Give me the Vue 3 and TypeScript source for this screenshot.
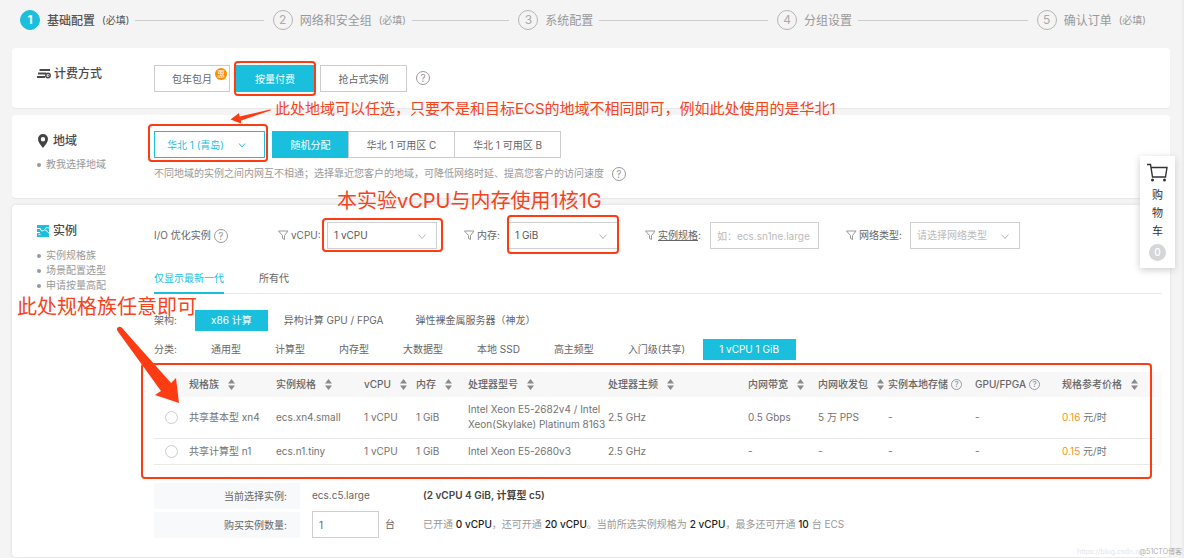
<script setup lang="ts">
import { ref } from 'vue'

interface Step { label: string; required: boolean }
interface Column { label: string; width?: number; sort?: boolean; help?: boolean }
interface Instance { id: string; cells: string[]; price: string }

const steps: Step[] = [
  { label: '基础配置', required: true },
  { label: '网络和安全组', required: true },
  { label: '系统配置', required: false },
  { label: '分组设置', required: false },
  { label: '确认订单', required: true },
]

const columns: Column[] = [
  { label: '规格族', width: 87, sort: true },
  { label: '实例规格', width: 88, sort: true },
  { label: 'vCPU', width: 52, sort: true },
  { label: '内存', width: 52, sort: true },
  { label: '处理器型号', width: 140, sort: true },
  { label: '处理器主频', width: 140, sort: true },
  { label: '内网带宽', width: 70, sort: true },
  { label: '内网收发包', width: 70, sort: true },
  { label: '实例本地存储', width: 87, help: true },
  { label: 'GPU/FPGA', width: 87, help: true },
  { label: '规格参考价格', sort: true },
]

const instances: Instance[] = [
  {
    id: 'ecs.xn4.small',
    cells: ['共享基本型 xn4', 'ecs.xn4.small', '1 vCPU', '1 GiB', 'Intel Xeon E5-2682v4 / Intel\nXeon(Skylake) Platinum 8163', '2.5 GHz', '0.5 Gbps', '5 万 PPS', '-', '-'],
    price: '0.16',
  },
  {
    id: 'ecs.n1.tiny',
    cells: ['共享计算型 n1', 'ecs.n1.tiny', '1 vCPU', '1 GiB', 'Intel Xeon E5-2680v3', '2.5 GHz', '-', '-', '-', '-'],
    price: '0.15',
  },
]

const zones = ['随机分配', '华北 1 可用区 C', '华北 1 可用区 B']
const architectures = ['x86 计算', '异构计算 GPU / FPGA', '弹性裸金属服务器（神龙）']
const categories = ['通用型', '计算型', '内存型', '大数据型', '本地 SSD', '高主频型', '入门级(共享)', '1 vCPU 1 GiB']

const zone = ref(zones[0])
const architecture = ref(architectures[0])
const category = ref(categories[7])
const selected = ref('')
const quantity = ref('1')
</script>

<template>
  <div class="page">
    <ol class="steps">
      <li v-for="(step, i) in steps" :key="step.label" :class="{ current: i === 0 }">
        <span class="num">{{ i + 1 }}</span>
        <span class="step-label">{{ step.label }}</span>
        <small v-if="step.required">(必填)</small>
        <i v-if="i < steps.length - 1" class="line"></i>
      </li>
    </ol>

    <section class="card billing">
      <div class="side">
        <h2>
          <svg width="14" height="12" viewBox="0 0 14 12" fill="none" stroke="#4a4a4a">
            <path d="M2.500 2H13M1 5.500h8M0 9h8" stroke-width="2" /><circle cx="11" cy="7.500" r="2.200" stroke-width="1.500" /><path d="M11 6.500v1.200h1" />
          </svg>
          计费方式
        </h2>
      </div>
      <div class="main options">
        <button class="btn month">包年包月<span class="deal">惠</span></button>
        <div class="mark mark-pay"><button class="btn on payg">按量付费</button></div>
        <button class="btn spot">抢占式实例</button>
        <button class="help" aria-label="计费方式说明">?</button>
      </div>
    </section>

    <section class="card region">
      <div class="side">
        <h2>
          <svg class="pin" width="14" height="14" viewBox="0 0 14 14"><path fill="#444" fill-rule="evenodd" d="M7 0a5 5 0 0 0-5 5c0 3.500 5 9 5 9s5-5.500 5-9a5 5 0 0 0-5-5zm0 3a2.200 2.200 0 1 1 0 4.400A2.200 2.200 0 0 1 7 3z" /></svg>
          地域
        </h2>
        <ul><li><a href="#region">教我选择地域</a></li></ul>
      </div>
      <div class="main">
        <div class="options">
          <div class="mark mark-region">
            <div class="select city">
              <select aria-label="地域"><option>华北 1 (青岛)</option></select>
              <svg width="8" height="5" viewBox="0 0 8 5"><path d="M1 0.500l3 3.500 3-3.500" /></svg>
            </div>
          </div>
          <div class="zones">
            <button v-for="z in zones" :key="z" class="btn" :class="{ on: zone === z }" @click="zone = z">{{ z }}</button>
          </div>
        </div>
        <p class="hint">不同地域的实例之间内网互不相通；选择靠近您客户的地域，可降低网络时延、提高您客户的访问速度 <button class="help" aria-label="地域说明">?</button></p>
      </div>
      <p class="note note-region">此处地域可以任选，只要不是和目标ECS的地域不相同即可，例如此处使用的是华北1</p>
      <svg class="arrow arrow-region" width="42" height="16" viewBox="0 0 42 16"><path d="M0.500 10.500L9 4l0.500 3.500L40 0.500Q41.500 0.500 40.500 1.500L11 11.500v3z" /></svg>
    </section>

    <section class="card instance">
      <div class="side">
        <h2>
          <svg width="13" height="12" viewBox="0 0 13 12"><path fill="#19bfdc" d="M0 0h12v12H0z" /><path d="M0 3.500h3.500M8 3.500q2-1.500 4-0.500M0 7.500h3M3 3.500q1.500 4 3.500 2t5.500 3M1.500 9.500h2" fill="none" stroke="#fff" /></svg>
          实例
        </h2>
        <ul>
          <li><a href="#family">实例规格族</a></li>
          <li><a href="#scene">场景配置选型</a></li>
          <li><a href="#quota">申请按量高配</a></li>
        </ul>
      </div>
      <div class="main">
        <div class="filters">
          <div class="io">I/O 优化实例<button class="help" aria-label="I/O 优化说明">?</button></div>
          <div class="filter">
            <label for="cpu"><svg class="funnel" width="11" height="11" viewBox="0 0 11 11"><path d="M0.500 1h9.500L6.500 5.500v4l-2-1v-3z" /></svg>vCPU:</label>
            <div class="mark mark-cpu"><div class="select"><select id="cpu"><option>1 vCPU</option></select><svg width="8" height="5" viewBox="0 0 8 5"><path d="M0.500 0.500l3.500 4 3.500-4" /></svg></div></div>
          </div>
          <div class="filter">
            <label for="mem"><svg class="funnel" width="11" height="11" viewBox="0 0 11 11"><path d="M0.500 1h9.500L6.500 5.500v4l-2-1v-3z" /></svg>内存:</label>
            <div class="mark mark-mem"><div class="select"><select id="mem"><option>1 GiB</option></select><svg width="8" height="5" viewBox="0 0 8 5"><path d="M0.500 0.500l3.500 4 3.500-4" /></svg></div></div>
          </div>
          <div class="filter">
            <label for="spec"><svg class="funnel" width="11" height="11" viewBox="0 0 11 11"><path d="M0.500 1h9.500L6.500 5.500v4l-2-1v-3z" /></svg><u>实例规格</u>:</label>
            <input id="spec" class="field" placeholder="如：ecs.sn1ne.large">
          </div>
          <div class="filter">
            <label for="net"><svg class="funnel" width="11" height="11" viewBox="0 0 11 11"><path d="M0.500 1h9.500L6.500 5.500v4l-2-1v-3z" /></svg>网络类型:</label>
            <div class="select empty"><select id="net"><option>请选择网络类型</option></select><svg width="8" height="5" viewBox="0 0 8 5"><path d="M0.500 0.500l3.500 4 3.500-4" /></svg></div>
          </div>
        </div>

        <div class="tabs"><button class="active">仅显示最新一代</button><button>所有代</button></div>

        <div class="chips arch"><span>架构:</span><button v-for="a in architectures" :key="a" :class="{ on: architecture === a }" @click="architecture = a">{{ a }}</button></div>
        <div class="chips kinds"><span>分类:</span><button v-for="c in categories" :key="c" :class="{ on: category === c }" @click="category = c">{{ c }}</button></div>

        <div class="mark mark-table table-wrap">
          <table>
            <colgroup><col class="pick"><col v-for="c in columns" :key="c.label" :style="c.width ? { width: c.width + 'px' } : undefined"></colgroup>
            <thead>
              <tr>
                <th></th>
                <th v-for="c in columns" :key="c.label">
                  <div class="head">{{ c.label }}<button v-if="c.sort" class="sort" :aria-label="c.label + '排序'"><svg width="7" height="11" viewBox="0 0 7 11"><path d="M3.500 0L7 4.500H0zM3.500 11L7 6.500H0z" fill="#8a8a8a" /></svg></button><button v-if="c.help" class="help small" :aria-label="c.label + '说明'">?</button></div>
                </th>
              </tr>
            </thead>
            <tbody>
              <tr v-for="row in instances" :key="row.id">
                <td class="pick-cell"><input v-model="selected" type="radio" name="instance" :value="row.id" :aria-label="row.id"></td>
                <td v-for="(cell, i) in row.cells" :key="i">{{ cell }}</td>
                <td><span class="price">{{ row.price }}</span> 元/时</td>
              </tr>
            </tbody>
          </table>
        </div>

        <dl class="summary">
          <dt>当前选择实例:</dt>
          <dd><span class="chosen">ecs.c5.large</span><b>(2 vCPU 4 GiB, 计算型 c5)</b></dd>
          <dt><label for="quantity">购买实例数量:</label></dt>
          <dd>
            <span class="count"><input id="quantity" v-model="quantity" class="field">台</span>
            <span class="quota">已开通 <strong>0 vCPU</strong>，还可开通 <strong>20 vCPU</strong>。当前所选实例规格为 <strong>2 vCPU</strong>，最多还可开通 <strong>10</strong> 台 ECS</span>
          </dd>
        </dl>
      </div>
      <p class="note note-spec">本实验vCPU与内存使用1核1G</p>
      <p class="note note-family">此处规格族任意即可</p>
      <svg class="arrow arrow-family" width="64" height="80" viewBox="0 0 64 80"><path d="M1.500 5Q0 2 2.500 1Q5 0 7 3L55 57l5-5 3 25-24-8 6-4z" /></svg>
    </section>

    <button class="cart">
      <svg width="21" height="19" viewBox="0 0 21 19" fill="none" stroke="#333"><path d="M0 1.500h3.500L5.500 14H18.500L20 4.500H4" stroke-width="1.400" /><circle cx="5.500" cy="17" r="1.500" fill="#333" stroke="none" /><circle cx="17.500" cy="17" r="1.500" fill="#333" stroke="none" /></svg>
      <span>购</span><span>物</span><span>车</span>
      <b>0</b>
    </button>
    <div class="watermark"><span>https://blog.csdn.n</span>@51CTO博客</div>
  </div>
</template>

<style>
body { background: #f4f4f4; }
</style>

<style scoped>
.page {
  position: relative;
  box-sizing: border-box;
  min-height: 100vh;
  padding: 0 12px;
  border-right: 2px solid #ececf0;
  background: #f4f4f4;
  color: #666;
  font: 10px/15px Inter, "Noto Sans CJK SC", sans-serif;
}
.page *, .page *::before, .page *::after { box-sizing: border-box; }
button, input, select { font: inherit; color: inherit; margin: 0; }
button { padding: 0; border: 0; background: none; white-space: nowrap; cursor: pointer; }
ol, ul, dl, dd, p, h2 { margin: 0; padding: 0; list-style: none; }
a { color: inherit; text-decoration: none; }

.steps { display: grid; grid-template-columns: 253fr 246fr 259fr 260fr auto; height: 48px; padding: 9px 24px 0 8px; color: #999; }
.steps li { display: flex; align-items: center; height: 21px; white-space: nowrap; font-size: 12px; }
.num { flex: none; width: 20px; height: 20px; margin-right: 7px; border: 1px solid #b5b5b5; border-radius: 50%; text-align: center; line-height: 18px; color: #aaa; }
.step-label, .steps small { padding-top: 2px; }
.steps small { margin-left: 7px; font-size: 10px; }
.line { flex: 1; height: 1px; margin: 2px 9px 0 6px; background: #ccc; }
.current { color: #555; font-weight: 500; }
.current small { font-weight: 400; }
.current .num { border-color: #19bfdc; background: #19bfdc; color: #fff; font-weight: 700; }

.card { position: relative; display: flex; margin-bottom: 7px; border-radius: 4px; background: #fff; box-shadow: 0 1px 1px #e8e8e8; }
.side { flex: none; width: 142px; padding-left: 25px; }
.main { flex: 1; min-width: 0; padding-right: 8px; }
h2 { display: flex; align-items: center; gap: 3px; font-size: 12px; font-weight: 500; line-height: 18px; color: #4a4a4a; }
.side ul { color: #999; }
.side li { display: flex; align-items: center; gap: 5px; }
.side li::before { content: ""; width: 4px; height: 4px; border-radius: 50%; background: #999; }

.btn { height: 27px; padding-top: 2px; border: 1px solid #ccc; background: #fff; }
.btn.on { border-color: #19bfdc; background: #19bfdc; color: #fff; }
.options { display: flex; align-items: center; }
.help { flex: none; width: 14px; height: 14px; border: 1px solid #999; border-radius: 50%; color: #999; font-size: 10px; line-height: 12px; text-align: center; vertical-align: middle; }
.help.small { width: 11px; height: 11px; margin-left: 3px; font-size: 8px; line-height: 9px; }

.mark { position: relative; }
.mark::after { content: ""; position: absolute; border: 2px solid #fd3c14; border-radius: 4px; pointer-events: none; }
.mark-pay::after { inset: -4px -2px; }
.mark-region::after { inset: -7px -3px -4px -6px; }
.mark-cpu::after { inset: -4px -6px -3px -5px; }
.mark-mem::after { inset: -7px -1px -5px; }
.mark-table::after { inset: -9px 3px -14px -13px; }

.billing { min-height: 60px; }
.billing .side { padding-top: 17px; }
.billing .main { height: 60px; }
.month { position: relative; width: 76px; }
.deal { position: absolute; top: 2px; right: 2px; width: 12px; height: 12px; border-radius: 50%; background: #ff8a00; color: #fff; font-size: 8px; line-height: 12px; }
.mark-pay { margin: 0 6px; }
.payg { width: 78px; }
.spot { width: 87px; margin-right: 9px; }

.region { min-height: 83px; }
.region .side { padding-top: 17px; }
.region .side ul { margin-top: 7px; }
.region .main { padding-top: 16px; }
.pin { margin-left: -1px; }
.zones { display: flex; margin-left: 7px; }
.zones .btn { width: 107px; margin-left: -1px; }
.zones .btn:first-child { width: 77px; margin-left: 0; }
.hint { margin-top: 8px; color: #999; }
.hint .help { margin-left: 5px; }

.select { position: relative; width: 110px; color: #555; }
.select select { display: block; width: 100%; height: 27px; padding: 0 24px 0 6px; border: 1px solid #d0d0d0; border-radius: 0; background: #fff; appearance: none; }
.select svg { position: absolute; top: 12px; right: 11px; fill: none; stroke: #b5b5b5; pointer-events: none; }
.select.city { width: 111px; color: #19bfdc; }
.city select { padding: 2px 24px 0 12px; border-color: #19bfdc; }
.city svg { right: 19px; stroke: #19bfdc; }
.select.empty, .field::placeholder { color: #bbb; }
.field { width: 109px; height: 27px; padding: 0 6px; border: 1px solid #d0d0d0; border-radius: 0; background: #fff; }

.instance { min-height: 352px; margin-bottom: 0; box-shadow: 0 0 3px #d8d8d8; }
.instance .side { padding-top: 17px; }
.instance .side ul { margin-top: 8px; }
.instance .main { padding-top: 17px; }
.filters { display: grid; grid-template-columns: 97px 159px 154px 174px 174px; gap: 27px; height: 27px; }
.io, .filter { display: flex; align-items: center; white-space: nowrap; }
.io { gap: 3px; }
.filter { justify-content: space-between; }
.filter label { display: flex; align-items: center; }
.funnel { margin-right: 2px; fill: none; stroke: #999; }

.tabs { display: flex; gap: 35px; height: 45px; border-bottom: 1px solid #e8e8e8; }
.tabs button { height: 45px; padding-top: 16px; border-bottom: 2px solid transparent; }
.tabs .active { border-color: #19bfdc; color: #19bfdc; }
.chips { display: flex; align-items: center; height: 21px; margin-top: 8px; }
.chips.arch { margin-top: 16px; }
.chips span { width: 41px; }
.chips button { height: 21px; padding: 0 16px; }
.kinds button { margin-right: 1px; padding: 0 17px 0 16px; }
.chips .on { background: #19bfdc; color: #fff; }

.table-wrap { margin-top: 12px; border-right: 7px solid #fbfbfb; }
table { width: 100%; table-layout: fixed; border-collapse: collapse; }
.pick { width: 35px; }
th { height: 25px; padding: 0; background: #f7f7f8; font-weight: 500; text-align: left; }
.head { display: flex; align-items: center; white-space: nowrap; }
.sort { display: flex; margin-left: 9px; }
td { height: 26px; padding: 0; border-bottom: 1px solid #e9e9e9; color: #737373; white-space: pre; }
tbody tr:first-child td { height: 41px; }
.pick-cell input { display: block; width: 13px; height: 13px; margin-left: 11px; border: 1px solid #ccc; border-radius: 50%; background: #fff; appearance: none; }
.pick-cell input:checked { border: 4px solid #19bfdc; }
.price { color: #f7941d; }

.summary { display: grid; grid-template-columns: 146px 1fr; gap: 3px 12px; margin-top: 18px; padding-bottom: 18px; }
dt { height: 26px; padding-right: 13px; background: #f7f9fb; line-height: 26px; text-align: right; }
dd { display: flex; align-items: center; height: 26px; }
.chosen, .count { flex: none; width: 111px; }
.summary b { color: #444; font-weight: 600; }
.count { display: flex; align-items: center; gap: 6px; }
.count .field { width: 67px; }
.quota { color: #999; }
.quota strong { color: #222; font-weight: 500; }

.note, .arrow { position: absolute; pointer-events: none; }
.note { color: #f5431e; font-size: 20px; line-height: 28px; white-space: nowrap; }
.note-region { top: -18px; left: 263px; font-size: 15px; line-height: 24px; }
.note-spec { top: -18px; left: 325px; }
.note-family { top: 88px; left: 5px; }
.arrow { fill: #fd3c14; }
.arrow-region { top: -6px; left: 218px; }
.arrow-family { top: 121px; left: 104px; }

.cart { position: absolute; top: 156px; right: 7px; display: flex; flex-direction: column; align-items: center; width: 35px; padding: 7px 0; background: #fff; box-shadow: 0 2px 7px #ccc; color: #333; font-size: 11px; line-height: 18px; }
.cart svg { margin-bottom: 4px; }
.cart b { width: 17px; height: 17px; margin-top: 4px; border-radius: 50%; background: #d5d6d8; color: #fff; font-size: 10px; font-weight: 500; line-height: 17px; }
.watermark { position: absolute; right: 0; bottom: 0; color: #aaa; font-size: 7px; line-height: 13px; }
.watermark span { color: #e5e5e5; }
</style>
